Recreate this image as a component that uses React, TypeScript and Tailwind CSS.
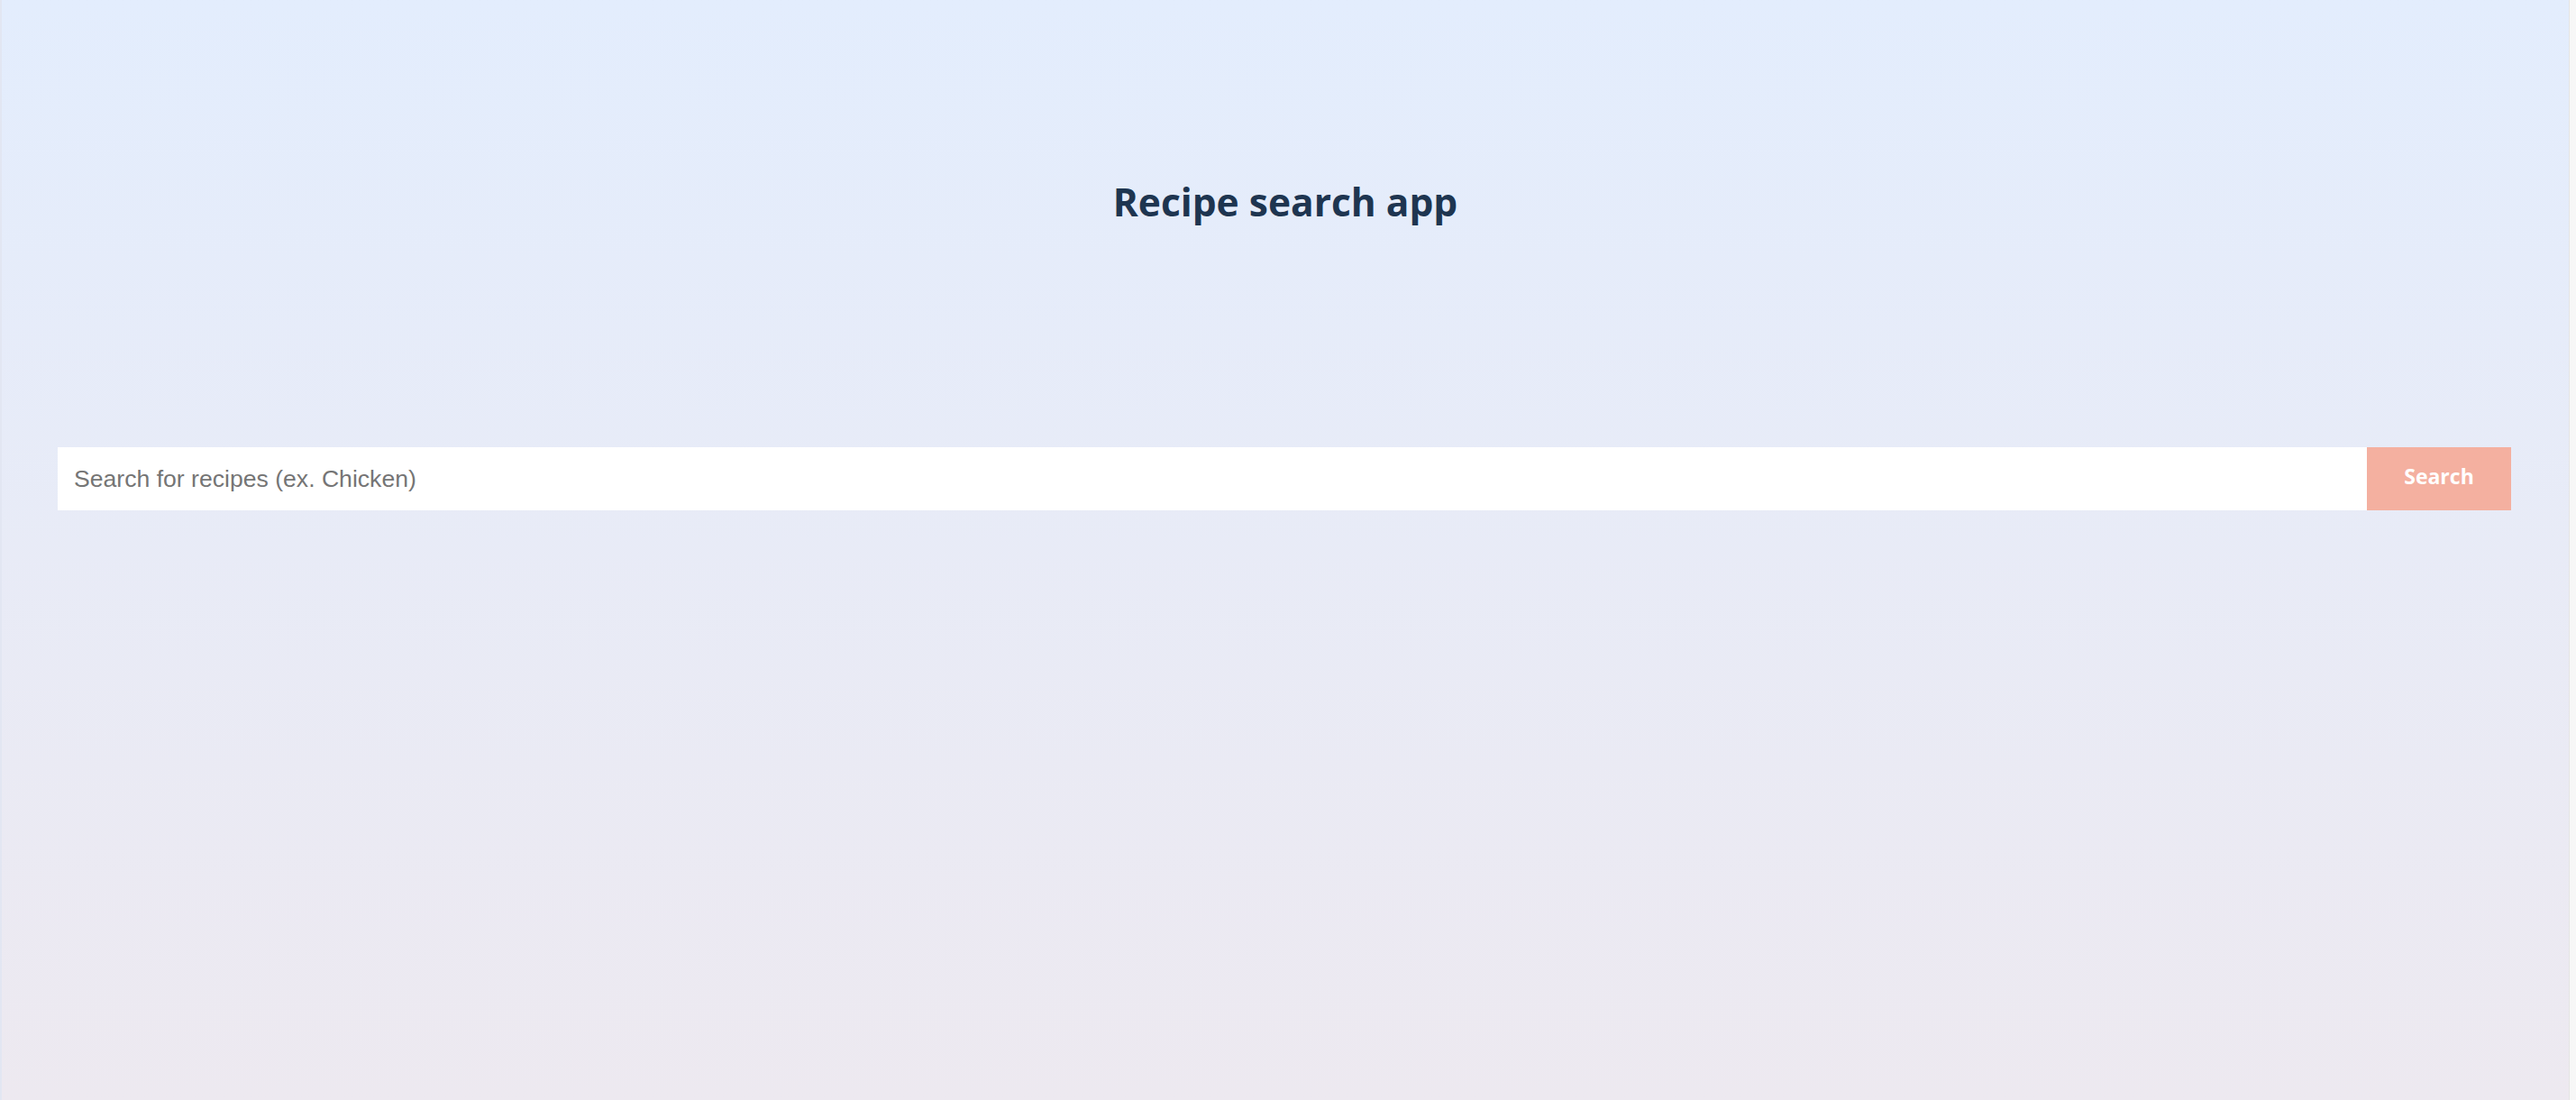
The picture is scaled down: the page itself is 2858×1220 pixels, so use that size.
export default function App() {
  return (
    <div className="flex h-[1220px] w-[2858px] overflow-hidden">
      <div className="flex h-full w-[2850px] flex-col border-l-2 border-[#e2e6f2] bg-gradient-to-b from-[#e3edfd] to-[#ede9f0]">
        <div className="flex h-[496px] flex-col items-center">
          <h1 className="mt-[196px] font-['Open_Sans',sans-serif] text-[42.5px] font-bold leading-[56px] text-[#1e3550]">
            Recipe search app
          </h1>
        </div>
        <div className="flex h-[70px] pl-[62px] pr-[64px]">
          <input
            className="h-full flex-1 bg-white pl-[18px] font-['Liberation_Sans',Arial,sans-serif] text-[26.6px] text-[#333] outline-none placeholder:text-[#757575]"
            placeholder="Search for recipes (ex. Chicken)"
          />
          <button className="flex h-full w-[160px] items-center justify-center bg-[#f4b0a0] pb-[5px] font-['Open_Sans',sans-serif] text-[23px] font-bold text-white">
            Search
          </button>
        </div>
      </div>
      <div className="h-full w-[8px] border-l border-[#e4e4e4] bg-[#f7f7f7]" />
    </div>
  );
}
